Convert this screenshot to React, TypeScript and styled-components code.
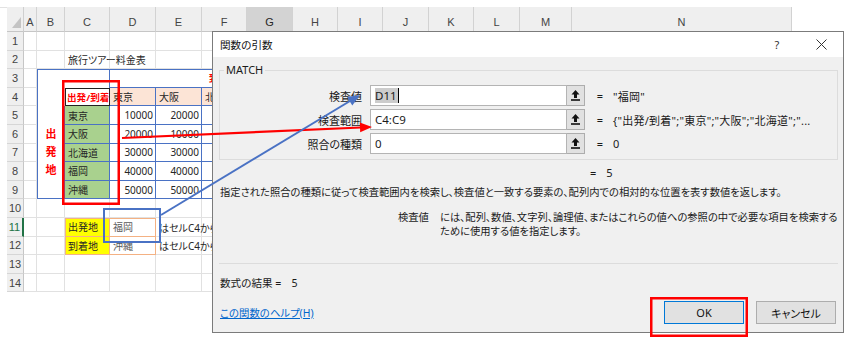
import styled, { createGlobalStyle } from 'styled-components'

const GlobalStyle = createGlobalStyle`
  *, *::before, *::after { box-sizing: border-box; }
  html, body { margin: 0; padding: 0; background: #fff; }
`

const COL_WIDTHS = [17, 13, 28, 45, 46, 46, 45, 46, 45, 45, 46, 45, 46, 52, 220]
const COL_NAMES = ['A', 'B', 'C', 'D', 'E', 'F', 'G', 'H', 'I', 'J', 'K', 'L', 'M', 'N']
const ROWS = Array.from({ length: 14 }, (_, i) => i + 1)

const CITIES = ['東京', '大阪', '北海道', '福岡', '沖縄']
const FARE_COLS = ['D', 'E', 'F', 'G', 'H']
const FARES = [
  [10000, 20000, 30000, 40000, 50000],
  [20000, 10000, 30000, 40000, 50000],
  [30000, 30000, 10000, 40000, 50000],
  [40000, 40000, 40000, 10000, 50000],
  [50000, 50000, 50000, 50000, 10000],
]

const ARGS = [
  { label: '検査値', text: 'D11', value: '"福岡"', selected: true },
  { label: '検査範囲', text: 'C4:C9', value: '{"出発/到着";"東京";"大阪";"北海道";"...', selected: false },
  { label: '照合の種類', text: '0', value: '0', selected: false },
]

const BLUE = '#4a72c4'
const ORANGE = '#f4b183'

const c = (letter: string) => COL_NAMES.indexOf(letter) + 2
const r = (n: number) => n + 1

const App = () => {
  return (
    <>
      <GlobalStyle />
      <Page>
        <FormulaEdge />
        <Sheet>
          <Corner $r={1} $c={1} />
          {COL_NAMES.map((name) => (
            <ColHead key={name} $r={1} $c={c(name)} $active={name === 'G'}>
              {name}
            </ColHead>
          ))}
          {ROWS.map((n) => (
            <RowHead key={n} $r={r(n)} $c={1} $active={n === 11}>
              {n}
            </RowHead>
          ))}
          {ROWS.flatMap((n) =>
            COL_NAMES.map((l) => <GridCell key={`${l}${n}`} $r={r(n)} $c={c(l)} />),
          )}

          <CellText $r={r(2)} $c={c('C')}>
            旅行ツアー料金表
          </CellText>

          {/* fare table */}
          <TCell $r={r(3)} $c={c('B')} $cs={2} $noBottom />
          <TCell $r={r(3)} $c={c('D')} $cs={5} $align='center' $red>
            到着地
          </TCell>
          <TCell $r={r(4)} $c={c('B')} $noBottom $noRight />
          <HeadCell $r={r(4)} $c={c('C')} $edge='#222' $box $red>
            出発/到着
          </HeadCell>
          {CITIES.map((city, i) => (
            <TCell key={city} $r={r(4)} $c={c(FARE_COLS[i])} $tone='peach'>
              {city}
            </TCell>
          ))}
          <VerticalCell $r={r(5)} $c={c('B')} $rs={5} $red>
            <span>出</span>
            <span>発</span>
            <span>地</span>
          </VerticalCell>
          {CITIES.map((city, i) => (
            <TCell key={city} $r={r(5 + i)} $c={c('C')} $tone='green'>
              {city}
            </TCell>
          ))}
          {FARES.flatMap((line, i) =>
            line.map((fare, j) => (
              <TCell key={`${i}-${j}`} $r={r(5 + i)} $c={c(FARE_COLS[j])} $align='right'>
                {fare}
              </TCell>
            )),
          )}
          <Frame $r={r(3)} $c={c('B')} $rs={7} $cs={7} $color={BLUE} />

          {/* lookup cells */}
          <TCell $r={r(11)} $c={c('C')} $tone='yellow' $edge={ORANGE}>
            出発地
          </TCell>
          <TCell $r={r(11)} $c={c('D')} $edge={ORANGE} $muted>
            福岡
          </TCell>
          <TCell $r={r(12)} $c={c('C')} $tone='yellow' $edge={ORANGE}>
            到着地
          </TCell>
          <TCell $r={r(12)} $c={c('D')} $edge={ORANGE} $muted>
            沖縄
          </TCell>
          <Frame $r={r(11)} $c={c('C')} $rs={2} $cs={2} $color={ORANGE} />
          <CellText $r={r(11)} $c={c('E')}>
            はセルC4から何番目か
          </CellText>
          <CellText $r={r(12)} $c={c('E')}>
            はセルC4から何番目か
          </CellText>
        </Sheet>

        <Dialog>
          <TitleBar>
            <TitleText>関数の引数</TitleText>
            <TitleButton>?</TitleButton>
            <TitleButton>
              <svg width='11' height='11' viewBox='0 0 11 11'>
                <path d='M0.5 0.5 L10.5 10.5 M10.5 0.5 L0.5 10.5' stroke='#333' strokeWidth='1' />
              </svg>
            </TitleButton>
          </TitleBar>

          <DialogBody>
            <GroupBox>
              <GroupLegend>MATCH</GroupLegend>
              {ARGS.map((arg) => (
                <ArgRow key={arg.label}>
                  <ArgLabel>{arg.label}</ArgLabel>
                  <ArgInput>
                    {arg.selected ? <Selection>{arg.text}</Selection> : arg.text}
                  </ArgInput>
                  <RefButton>
                    <svg width='9' height='11' viewBox='0 0 9 11'>
                      <path d='M4.5 0 L8.5 4.5 H6 V8 H3 V4.5 H0.5 Z' fill='#111' />
                      <rect x='0' y='9.2' width='9' height='1.6' fill='#111' />
                    </svg>
                  </RefButton>
                  <Equals>=</Equals>
                  <ArgValue>{arg.value}</ArgValue>
                </ArgRow>
              ))}
            </GroupBox>

            <ResultLine>
              <ResultEquals>=</ResultEquals>
              <ResultNumber>5</ResultNumber>
            </ResultLine>

            <Description>
              指定された照合の種類に従って検査範囲内を検索し、検査値と一致する要素の、配列内での相対的な位置を表す数値を返します。
            </Description>

            <ArgHelp>
              <ArgName>検査値</ArgName>
              <ArgHelpText>
                には、配列、数値、文字列、論理値、またはこれらの値への参照の中で必要な項目を検索する
                <br />
                ために使用する値を指定します。
              </ArgHelpText>
            </ArgHelp>

            <Separator />

            <FormulaResult>
              数式の結果 =<ResultNumber>5</ResultNumber>
            </FormulaResult>

            <Footer>
              <HelpLink>この関数のヘルプ(H)</HelpLink>
              <Buttons>
                <DialogButton $primary>OK</DialogButton>
                <DialogButton>キャンセル</DialogButton>
              </Buttons>
            </Footer>
          </DialogBody>
        </Dialog>

        <Annotations width='857' height='351' viewBox='0 0 857 351'>
          <rect x='63.25' y='81.25' width='55.5' height='122.5' fill='none' stroke='#f00' strokeWidth='2.5' />
          <rect x='104' y='209' width='56' height='33' fill='none' stroke={BLUE} strokeWidth='2' />
          <rect x='651.25' y='298.25' width='95.5' height='37.5' fill='none' stroke='#f00' strokeWidth='2.5' />
          <line x1='122' y1='138' x2='361' y2='127.5' stroke='#f00' strokeWidth='2.2' />
          <polygon points='372,127 360.2,132.2 359.8,122.4' fill='#f00' />
          <line x1='161' y1='215' x2='350' y2='101' stroke={BLUE} strokeWidth='2' />
          <polygon points='360,95 352.3,105.5 347.1,96.9' fill={BLUE} />
        </Annotations>
      </Page>
    </>
  )
}

export default App

const Page = styled.div`
  position: relative;
  width: 857px;
  height: 351px;
  overflow: hidden;
  background: #fff;
  font-family: 'Noto Sans', 'Noto Sans CJK JP', sans-serif;
  font-feature-settings: 'palt';
`

const FormulaEdge = styled.div`
  height: 8px;
  margin-right: 65px;
  border-top: 5px solid #fff;
  border-bottom: 1px solid #e2e2e2;
`

const Sheet = styled.div`
  display: grid;
  grid-template-columns: ${COL_WIDTHS.map((w) => `${w}px`).join(' ')};
  grid-template-rows: 25px repeat(14, 18.6px);
  width: max-content;
  margin-left: 7px;
  margin-top: -1px;
`

const Placed = styled.div<{ $r: number; $c: number; $rs?: number; $cs?: number }>`
  grid-row: ${({ $r, $rs }) => `${$r} / span ${$rs ?? 1}`};
  grid-column: ${({ $c, $cs }) => `${$c} / span ${$cs ?? 1}`};
  min-width: 0;
`

const Corner = styled(Placed)`
  background: #efefef;
  border-right: 1px solid #cfcfcf;
  border-bottom: 1px solid #c6c6c6;
  position: relative;

  &::after {
    content: '';
    position: absolute;
    right: 2px;
    bottom: 3px;
    border-style: solid;
    border-width: 0 0 11px 9px;
    border-color: transparent transparent #c4c4c4 transparent;
  }
`

const ColHead = styled(Placed)<{ $active?: boolean }>`
  background: ${({ $active }) => ($active ? '#d3d3d3' : '#efefef')};
  border-right: 1px solid #d2d2d2;
  border-bottom: 1px solid #c6c6c6;
  display: flex;
  align-items: center;
  justify-content: center;
  padding-top: 5px;
  font: 11px 'Liberation Sans', sans-serif;
  color: ${({ $active }) => ($active ? '#262626' : '#444')};
`

const RowHead = styled(Placed)<{ $active?: boolean }>`
  background: #efefef;
  border-bottom: 1px solid #d6d6d6;
  border-right: ${({ $active }) => ($active ? '2px solid #217346' : '1px solid #c6c6c6')};
  display: flex;
  align-items: center;
  justify-content: center;
  font: 11px 'Liberation Sans', sans-serif;
  color: ${({ $active }) => ($active ? '#217346' : '#444')};
`

const GridCell = styled(Placed)`
  border-right: 1px solid #e1e1e1;
  border-bottom: 1px solid #e1e1e1;
`

const CellText = styled(Placed)`
  display: flex;
  align-items: center;
  padding-left: 3px;
  font-size: 10px;
  color: #262626;
  white-space: nowrap;
  overflow: visible;
`

type Tone = 'plain' | 'peach' | 'green' | 'yellow'

const TONES: Record<Tone, string> = {
  plain: '#fff',
  peach: '#fce4d6',
  green: '#a9d18e',
  yellow: '#ffff00',
}

const TCell = styled(Placed)<{
  $tone?: Tone
  $align?: 'left' | 'right' | 'center'
  $edge?: string
  $box?: boolean
  $red?: boolean
  $muted?: boolean
  $noBottom?: boolean
  $noRight?: boolean
}>`
  display: flex;
  align-items: center;
  justify-content: ${({ $align = 'left' }) =>
    $align === 'right' ? 'flex-end' : $align === 'center' ? 'center' : 'flex-start'};
  padding: 0 2px 0 3px;
  background: ${({ $tone = 'plain' }) => TONES[$tone]};
  border-right: ${({ $edge = BLUE, $noRight }) => ($noRight ? 'none' : `1px solid ${$edge}`)};
  border-bottom: ${({ $edge = BLUE, $noBottom }) => ($noBottom ? 'none' : `1px solid ${$edge}`)};
  border-top: ${({ $edge = BLUE, $box }) => ($box ? `1px solid ${$edge}` : 'none')};
  border-left: ${({ $edge = BLUE, $box }) => ($box ? `1px solid ${$edge}` : 'none')};
  font-size: 10px;
  font-weight: ${({ $red }) => ($red ? 700 : 400)};
  color: ${({ $red, $muted }) => ($red ? '#ff0000' : $muted ? '#595959' : '#262626')};
  white-space: nowrap;
  overflow: hidden;
`

const HeadCell = styled(TCell)`
  padding: 0 0 0 1px;
  font-size: 9.6px;
`

const VerticalCell = styled(TCell)`
  flex-direction: column;
  justify-content: center;
  align-items: center;
  line-height: 18px;
  font-size: 11px;
`

const Frame = styled(Placed)<{ $color: string }>`
  border: 1px solid ${({ $color }) => $color};
  pointer-events: none;
`

const Dialog = styled.div`
  position: absolute;
  left: 212px;
  top: 31px;
  width: 632px;
  height: 302px;
  border: 1px solid #7b7b7b;
  background: #f0f0f0;
  display: flex;
  flex-direction: column;
  font-size: 11px;
  color: #1a1a1a;
  z-index: 2;
`

const TitleBar = styled.div`
  height: 25px;
  background: #fff;
  display: flex;
  align-items: center;
  padding-left: 7px;
`

const TitleText = styled.div`
  flex: 1;
  font-size: 10.6px;
  color: #111;
`

const TitleButton = styled.div`
  width: 44px;
  height: 25px;
  display: flex;
  align-items: center;
  justify-content: center;
  font-size: 11px;
  color: #333;
`

const DialogBody = styled.div`
  flex: 1;
  display: flex;
  flex-direction: column;
  padding: 0 5px 0 6px;
`

const GroupBox = styled.div`
  position: relative;
  margin-top: 13px;
  height: 90px;
  border: 1px solid #dcdcdc;
  padding-top: 14px;
  display: flex;
  flex-direction: column;
  gap: 3px;
`

const GroupLegend = styled.div`
  position: absolute;
  top: -8px;
  left: 4px;
  padding: 0 2px;
  line-height: 14px;
  background: #f0f0f0;
`

const ArgRow = styled.div`
  display: flex;
  align-items: center;
  height: 21px;
`

const ArgLabel = styled.div`
  width: 142px;
  margin-right: 8px;
  text-align: right;
`

const ArgInput = styled.div`
  width: 197px;
  height: 21px;
  background: #fff;
  border: 1px solid #b4b4b4;
  padding-left: 4px;
  display: flex;
  align-items: center;
  font-size: 11.5px;
`

const Selection = styled.span`
  background: #cccccc;
  border-right: 1px solid #000;
  line-height: 15px;
  padding-right: 1px;
`

const RefButton = styled.div`
  width: 18px;
  height: 21px;
  background: #e1e1e1;
  border: 1px solid #adadad;
  border-left: none;
  display: flex;
  align-items: center;
  justify-content: center;
`

const Equals = styled.div`
  width: 20px;
  margin-left: 5px;
  text-align: center;
`

const ArgValue = styled.div`
  margin-left: 3px;
  white-space: nowrap;
  letter-spacing: 0.25px;
`

const ResultLine = styled.div`
  display: flex;
  height: 14px;
  line-height: 14px;
  margin-top: 6px;
`

const ResultEquals = styled.span`
  margin-left: 371px;
`

const ResultNumber = styled.span`
  margin-left: 10px;
`

const Description = styled.div`
  margin-top: 5px;
  height: 14px;
  line-height: 14px;
  padding-left: 1px;
  white-space: nowrap;
  font-size: 10.3px;
`

const ArgHelp = styled.div`
  display: flex;
  margin-top: 11px;
  line-height: 14px;
  font-size: 10.3px;
`

const ArgName = styled.div`
  flex: none;
  margin-left: 179px;
  width: 42px;
  white-space: nowrap;
`

const ArgHelpText = styled.div`
  flex: none;
  white-space: nowrap;
`

const Separator = styled.div`
  height: 1px;
  margin-top: 25px;
  background: #dcdcdc;
`

const FormulaResult = styled.div`
  margin-top: 12px;
  height: 14px;
  line-height: 14px;
  padding-left: 1px;
  font-size: 10.6px;
`

const Footer = styled.div`
  display: flex;
  align-items: center;
  justify-content: space-between;
  margin-top: 11px;
  height: 23px;
  padding: 0 2px 0 1px;
`

const HelpLink = styled.a`
  color: #0066cc;
  text-decoration: underline;
  cursor: pointer;
  font-size: 10.4px;
`

const Buttons = styled.div`
  display: flex;
  gap: 12px;
`

const DialogButton = styled.div<{ $primary?: boolean }>`
  width: 80px;
  height: 23px;
  background: #e1e1e1;
  border: 1px solid ${({ $primary }) => ($primary ? '#0078d7' : '#adadad')};
  display: flex;
  align-items: center;
  justify-content: center;
  color: #111;
`

const Annotations = styled.svg`
  position: absolute;
  left: 0;
  top: 0;
  pointer-events: none;
  z-index: 3;
`
